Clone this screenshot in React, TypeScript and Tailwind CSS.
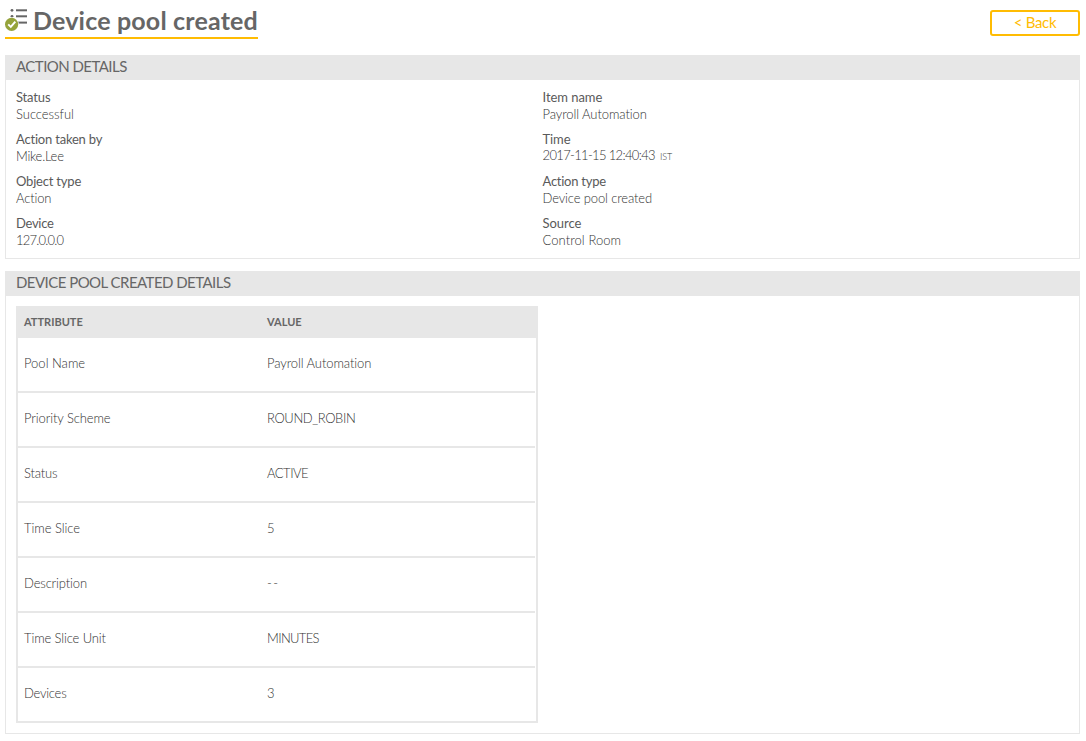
import React from "react";

type Field = { label: string; value: string; suffix?: string; labelCls: string; valueCls: string };

const leftFields: Field[] = [
  { label: "Status", value: "Successful", labelCls: "tracking-[-0.15px]", valueCls: "tracking-[-0.03px]" },
  { label: "Action taken by", value: "Mike.Lee", labelCls: "tracking-[-0.2px]", valueCls: "tracking-[-0.25px]" },
  { label: "Object type", value: "Action", labelCls: "tracking-[-0.2px]", valueCls: "tracking-[-0.15px]" },
  { label: "Device", value: "127.0.0.0", labelCls: "tracking-[-0.3px]", valueCls: "tracking-[-0.8px]" },
];

const rightFields: Field[] = [
  { label: "Item name", value: "Payroll Automation", labelCls: "tracking-[-0.05px]", valueCls: "tracking-[-0.09px]" },
  { label: "Time", value: "2017-11-15 12:40:43", suffix: "IST", labelCls: "tracking-[-0.1px]", valueCls: "tracking-[-0.66px]" },
  { label: "Action type", value: "Device pool created", labelCls: "tracking-[-0.25px]", valueCls: "tracking-[-0.13px]" },
  { label: "Source", value: "Control Room", labelCls: "tracking-[-0.05px]", valueCls: "tracking-[0.07px]" },
];

const rows = [
  { name: "Pool Name", value: "Payroll Automation", nameCls: "", valueCls: "tracking-[-0.09px]" },
  { name: "Priority Scheme", value: "ROUND_ROBIN", nameCls: "tracking-[-0.1px]", valueCls: "tracking-[-0.4px]" },
  { name: "Status", value: "ACTIVE", nameCls: "tracking-[-0.2px]", valueCls: "tracking-[-0.5px]" },
  { name: "Time Slice", value: "5", nameCls: "tracking-[-0.05px]", valueCls: "" },
  { name: "Description", value: "--", nameCls: "tracking-[-0.15px]", valueCls: "tracking-[1.4px]" },
  { name: "Time Slice Unit", value: "MINUTES", nameCls: "tracking-[-0.13px]", valueCls: "tracking-[-0.65px]" },
  { name: "Devices", value: "3", nameCls: "tracking-[-0.25px]", valueCls: "" },
];

function AuditIcon() {
  return (
    <svg width="24" height="24" viewBox="0 0 24 24" className="shrink-0">
      <g fill="#666666">
        <circle cx="7" cy="2.3" r="1.4" />
        <rect x="11" y="1.3" width="11" height="2" />
        <circle cx="7" cy="8.3" r="1.4" />
        <rect x="11" y="7.3" width="11" height="2" />
        <rect x="11" y="13.6" width="11" height="2" />
      </g>
      <circle cx="6.6" cy="16.3" r="7.1" fill="#ffffff" />
      <circle cx="6.6" cy="16.3" r="6.6" fill="#95a33b" />
      <path d="M3.2 16.4 5.8 18.9 10.3 13.7" fill="none" stroke="#ffffff" strokeWidth="2" />
    </svg>
  );
}

function FieldColumn({ fields }: { fields: Field[] }) {
  return (
    <dl className="flex flex-col gap-2">
      {fields.map((f) => (
        <div key={f.label} className="h-[34px] whitespace-nowrap text-[13px] leading-[17px]">
          <dt className="text-[#5a5a5a]">
            <span className={f.labelCls}>{f.label}</span>
          </dt>
          <dd className={`font-light text-[#333333] ${f.suffix ? "-mt-px" : ""}`}>
            <span className={f.valueCls}>{f.value}</span>
            {f.suffix && <span className="ml-[5px] text-[9px] leading-none">{f.suffix}</span>}
          </dd>
        </div>
      ))}
    </dl>
  );
}

export default function App() {
  return (
    <div className="h-[741px] w-[1086px] overflow-hidden bg-white pr-[6px] pl-[5px] font-['Lato',sans-serif] text-[#666666] [font-variant-ligatures:none]">
      <header className="flex h-[55px] items-start justify-between">
        <div className="flex h-[39px] w-[253px] items-start border-b-2 border-[#ffbc03] pt-2">
          <AuditIcon />
          <h1 className="-mt-1 ml-1 whitespace-nowrap text-[25px] leading-[32px] font-bold tracking-[0.18px]">Device pool created</h1>
        </div>
        <button className="mt-[10px] h-[26px] w-[90px] rounded-[3px] border-2 border-[#ffbc03] pb-[2px] text-[15px] leading-[20px] tracking-[-0.3px] text-[#ffbc03]">
          &lt; Back
        </button>
      </header>

      <section className="h-[204px] border border-t-0 border-[#e7e7e7]">
        <h2 className="-mx-px h-[25px] bg-[#e7e7e7] pl-[11px] text-[15px] leading-[22px] tracking-[-0.54px]">ACTION DETAILS</h2>
        <div className="grid grid-cols-[526.5px_1fr] pt-[9px] pl-[10px]">
          <FieldColumn fields={leftFields} />
          <FieldColumn fields={rightFields} />
        </div>
      </section>

      <section className="mt-3 h-[463px] border border-t-0 border-[#e7e7e7]">
        <h2 className="-mx-px h-[25px] bg-[#e7e7e7] pl-[11px] text-[15px] leading-[22px] tracking-[-0.54px]">DEVICE POOL CREATED DETAILS</h2>
        <div className="mt-[10px] ml-[10px] w-[522px] border-x-2 border-b-2 border-[#e7e7e7]">
          <div className="grid h-8 grid-cols-[243px_1fr] bg-[#e7e7e7] pl-[6px] text-[11px] leading-8 font-bold">
            <span>ATTRIBUTE</span>
            <span>VALUE</span>
          </div>
          {rows.map((r, i) => (
            <div
              key={r.name}
              className={`mr-px grid grid-cols-[243px_1fr] pl-[6px] text-[13px] leading-[50px] font-light text-[#333333] ${i < rows.length - 1 ? "h-[55px] border-b-2 border-[#e7e7e7]" : "h-[53px]"}`}
            >
              <span><span className={r.nameCls}>{r.name}</span></span>
              <span><span className={r.valueCls}>{r.value}</span></span>
            </div>
          ))}
        </div>
      </section>
    </div>
  );
}
